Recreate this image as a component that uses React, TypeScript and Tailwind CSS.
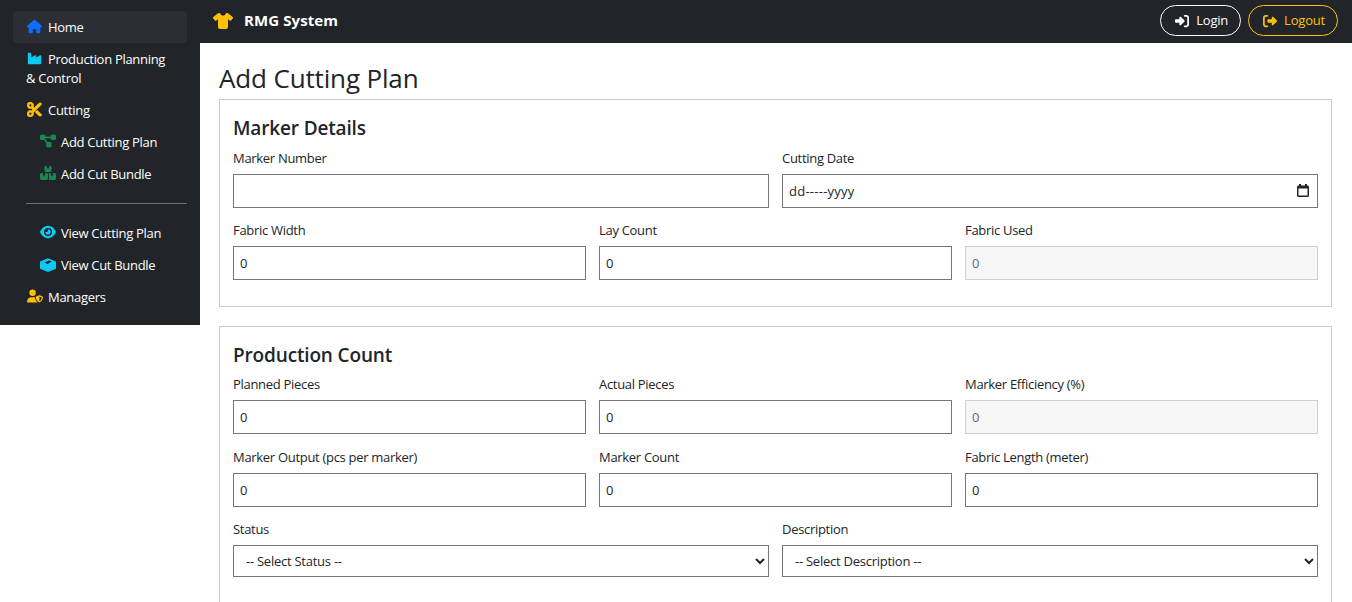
import { FaHouse, FaIndustry, FaScissors, FaDiagramProject, FaBoxesStacked, FaEye, FaUserShield, FaShirt, FaRightToBracket, FaRightFromBracket } from 'react-icons/fa6';
import type { ReactNode } from 'react';

function NavItem({ icon, children, sub, active }: { icon: ReactNode; children: ReactNode; sub?: boolean; active?: boolean }) {
  return (
    <a className={`block py-[6.5px] text-[13px] leading-[19px] tracking-[-0.3px] text-white rounded-[4px] ${sub ? 'pl-[26px] pr-[13px]' : 'px-[13px]'} ${active ? 'bg-[#2b2e34]' : ''}`}>
      <span className="inline-block w-[22px] pl-px align-[-2px]">{icon}</span>
      {children}
    </a>
  );
}

function Field({ label, children }: { label: string; children: ReactNode }) {
  return (
    <div className="mb-[12.5px]">
      <label className="block mb-[5px] text-[13px] leading-[21px] tracking-[-0.3px] font-medium text-[#212529]">{label}</label>
      {children}
    </div>
  );
}

function TextInput({ value = '', disabled }: { value?: string; disabled?: boolean }) {
  return (
    <input
      readOnly
      value={value}
      className={`block w-full h-[34px] px-[6px] text-[13px] border outline-none ${disabled ? 'bg-[#f6f6f6] border-[#cfcfcf] text-[#5f6b73]' : 'bg-white border-[#767676] text-[#212529]'}`}
    />
  );
}

function SelectInput({ label }: { label: string }) {
  return (
    <select className="block w-full h-[32px] pl-[8px] text-[13px] tracking-[-0.25px] bg-white border border-[#767676] text-[#212529] outline-none appearance-auto">
      <option>{label}</option>
    </select>
  );
}

function CalendarIcon() {
  return (
    <svg width="12" height="13" viewBox="0 0 12 13" className="mr-[2px] text-[#212529]">
      <path fill="currentColor" d="M2 0h2v1.5h4V0h2v1.5h.5A1.5 1.5 0 0 1 12 3v8.5a1.5 1.5 0 0 1-1.5 1.5h-9A1.5 1.5 0 0 1 0 11.5V3a1.5 1.5 0 0 1 1.5-1.5H2zM1.5 4.5v7h9v-7z" />
    </svg>
  );
}

// closed carton with the flap showing on top
function BundleIcon() {
  return (
    <svg width="16" height="14" viewBox="0 0 16 14" className="text-[#0dcaf0]">
      <path fill="currentColor" d="M8 0.2 15.4 3.2a1 1 0 0 1 .6.9V10a1 1 0 0 1-.6.9L8 14 .6 10.9A1 1 0 0 1 0 10V4.1a1 1 0 0 1 .6-.9z" />
      <path fill="#212529" d="M4.5 4.6 9.2 2.4 11.6 3.4 7.6 6z" />
    </svg>
  );
}

export default function App() {
  return (
    <div className="flex h-screen overflow-hidden bg-white font-['Open_Sans',sans-serif]">
      <aside className="w-[200px] shrink-0 self-start bg-[#212529] pt-[11px] pb-[12px] px-[13px]">
        <NavItem active icon={<FaHouse className="text-[#0d6efd] text-[15px]" />}>Home</NavItem>
        <NavItem icon={<FaIndustry className="text-[#0dcaf0] text-[15px]" />}>Production Planning &amp; Control</NavItem>
        <NavItem icon={<FaScissors className="text-[#ffc107] text-[15px] [stroke-width:24px]" />}>Cutting</NavItem>
        <NavItem sub icon={<FaDiagramProject className="text-[#198754] text-[16px]" />}>Add Cutting Plan</NavItem>
        <NavItem sub icon={<FaBoxesStacked className="text-[#198754] text-[16px]" />}>Add Cut Bundle</NavItem>
        <hr className="my-[13px] ml-[13px] border-t border-[#6c6f73]" />
        <NavItem sub icon={<FaEye className="text-[#0dcaf0] text-[16px]" />}>View Cutting Plan</NavItem>
        <NavItem sub icon={<BundleIcon />}>View Cut Bundle</NavItem>
        <NavItem icon={<FaUserShield className="text-[#ffc107] text-[16px]" />}>Managers</NavItem>
      </aside>

      <div className="flex-1 min-w-0">
        <header className="h-[43px] bg-[#212529] flex items-center justify-between pl-[13px] pr-[14px]">
          <div className="flex items-center pb-[2px] text-white text-[15px] font-bold tracking-[0.1px]">
            <FaShirt className="text-[#ffc107] text-[20px] mr-[11px]" />
            RMG System
          </div>
          <div className="flex items-center gap-[7px] mb-[2px]">
            <button className="flex items-center h-[31px] pl-[14px] pr-[12px] rounded-full border border-white text-white text-[13px] tracking-[-0.2px]">
              <FaRightToBracket className="text-[14px] mr-[7px]" />
              Login
            </button>
            <button className="flex items-center h-[31px] pl-[14px] pr-[12px] rounded-full border border-[#ffc107] text-[#ffc107] text-[13px] tracking-[-0.2px]">
              <FaRightFromBracket className="text-[14px] mr-[7px]" />
              Logout
            </button>
          </div>
        </header>

        <main className="pl-[19px] pr-[20px] pt-[16px]">
          <h1 className="text-[26px] leading-[39px] mb-px tracking-[-0.15px] font-medium text-[#212529]">Add Cutting Plan</h1>

          <section className="border border-[#cccccc] px-[13px] pt-[15px] pb-[12.8px] mb-[19px]">
            <h2 className="text-[19px] leading-[26px] tracking-[-0.15px] font-semibold text-[#212529] mb-[6.8px]">Marker Details</h2>
            <div className="grid grid-cols-2 gap-x-[13px]">
              <Field label="Marker Number"><TextInput /></Field>
              <Field label="Cutting Date">
                <div className="flex items-center h-[34px] px-[6px] border border-[#767676] bg-white">
                  <span className="flex-1 pt-px text-[13px] tracking-[0.25px] text-[#212529]">dd-----yyyy</span>
                  <CalendarIcon />
                </div>
              </Field>
            </div>
            <div className="grid grid-cols-3 gap-x-[13px]">
              <Field label="Fabric Width"><TextInput value="0" /></Field>
              <Field label="Lay Count"><TextInput value="0" /></Field>
              <Field label="Fabric Used"><TextInput value="0" disabled /></Field>
            </div>
          </section>

          <section className="border border-[#cccccc] px-[13px] pt-[15px] pb-[15px]">
            <h2 className="text-[19px] leading-[26px] tracking-[-0.15px] font-semibold text-[#212529] mb-[6.8px]">Production Count</h2>
            <div className="grid grid-cols-3 gap-x-[13px]">
              <Field label="Planned Pieces"><TextInput value="0" /></Field>
              <Field label="Actual Pieces"><TextInput value="0" /></Field>
              <Field label="Marker Efficiency (%)"><TextInput value="0" disabled /></Field>
              <Field label="Marker Output (pcs per marker)"><TextInput value="0" /></Field>
              <Field label="Marker Count"><TextInput value="0" /></Field>
              <Field label="Fabric Length (meter)"><TextInput value="0" /></Field>
            </div>
            <div className="grid grid-cols-2 gap-x-[13px]">
              <Field label="Status"><SelectInput label="-- Select Status --" /></Field>
              <Field label="Description"><SelectInput label="-- Select Description --" /></Field>
            </div>
          </section>
        </main>
      </div>
    </div>
  );
}
